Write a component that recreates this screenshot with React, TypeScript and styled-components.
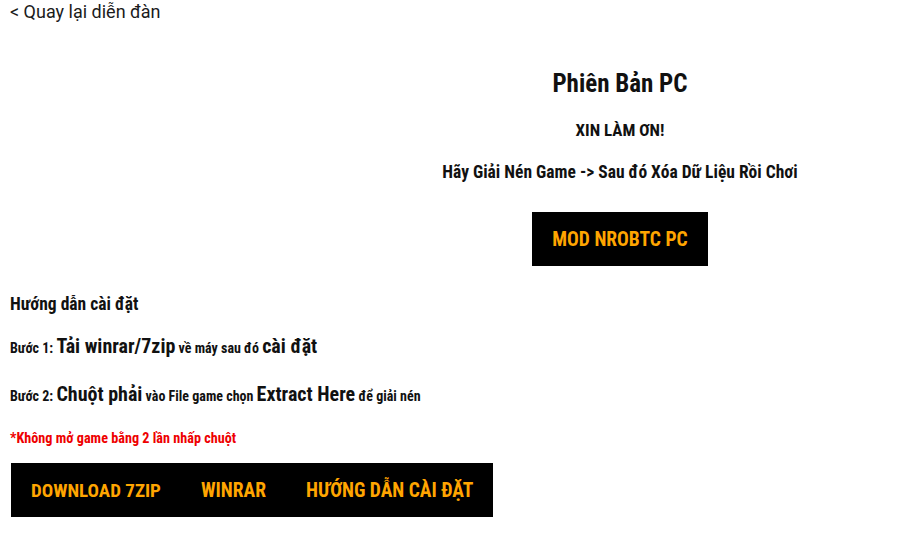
import React from "react";
import styled, { createGlobalStyle } from "styled-components";

const GlobalStyle = createGlobalStyle`
  html, body { margin: 0; padding: 0; background: #ffffff; }
  body { font-family: Roboto, "Liberation Sans", sans-serif; color: #111; }
  * { box-sizing: border-box; }
`;

const condensed = `"Roboto Condensed", "Open Sans", sans-serif`;

const Page = styled.div`
  padding: 0 10px;
`;

const BackLink = styled.a`
  display: block;
  font-family: Roboto, "Liberation Sans", sans-serif;
  font-size: 18px;
  line-height: 24px;
  color: #1b1b1b;
  text-decoration: none;
`;

const Hero = styled.section`
  display: grid;
  grid-template-columns: 410px 400px;
  margin-top: 42px;
`;

const Side = styled.div``;

const Panel = styled.div`
  display: flex;
  flex-direction: column;
  align-items: center;
  text-align: center;
  font-family: ${condensed};
  font-weight: 700;
  color: #111;
`;

const Title = styled.h2`
  margin: 0;
  font-size: 25px;
  line-height: 36px;
  font-weight: 700;
`;

const Line = styled.p<{ $size: number; $gap: number }>`
  margin: ${(p) => p.$gap}px 0 0;
  font-size: ${(p) => p.$size}px;
  line-height: 24px;
`;

const BlackButton = styled.a<{ $size?: number }>`
  display: inline-flex;
  align-items: center;
  justify-content: center;
  height: 54px;
  padding: 0 20px;
  background: #000;
  color: #ffa500;
  font-family: ${condensed};
  font-weight: 700;
  font-size: ${(p) => p.$size ?? 19.5}px;
  text-transform: uppercase;
  text-decoration: none;
  white-space: nowrap;
`;

const HeroButton = styled(BlackButton)`
  margin-top: 28px;
`;

const Guide = styled.section`
  margin-top: 26px;
  font-family: ${condensed};
  font-weight: 700;
  color: #111;
`;

const GuideTitle = styled.h3`
  margin: 0;
  font-size: 17.5px;
  line-height: 24px;
`;

const Step = styled.p<{ $gap: number }>`
  margin: ${(p) => p.$gap}px 0 0;
  font-size: 14px;
  line-height: 28px;
`;

const Big = styled.span`
  font-family: Roboto, "Liberation Sans", sans-serif;
  font-weight: 700;
  font-stretch: 87.5%;
  font-size: 20px;
`;

const Warning = styled.p`
  margin: 18px 0 0;
  color: #ee0000;
  font-size: 14.2px;
  line-height: 20px;
`;

const ButtonBar = styled.div`
  display: flex;
  width: fit-content;
  margin: 15px 0 0 1px;
`;

export default function App() {
  return (
    <>
      <GlobalStyle />
      <Page>
        <BackLink href="#">&lt; Quay lại diễn đàn</BackLink>
        <Hero>
          <Side />
          <Panel>
            <Title>Phiên Bản PC</Title>
            <Line $size={17} $gap={16}>XIN LÀM ƠN!</Line>
            <Line $size={17.5} $gap={18}>Hãy Giải Nén Game -&gt; Sau đó Xóa Dữ Liệu Rồi Chơi</Line>
            <HeroButton href="#">MOD NROBTC PC</HeroButton>
          </Panel>
        </Hero>
        <Guide>
          <GuideTitle>Hướng dẫn cài đặt</GuideTitle>
          <Step $gap={16}>
            Bước 1: <Big>Tải winrar/7zip</Big> về máy sau đó <Big>cài đặt</Big>
          </Step>
          <Step $gap={18}>
            Bước 2: <Big>Chuột phải</Big> vào File game chọn <Big>Extract Here</Big> để giải nén
          </Step>
          <Warning>*Không mở game bằng 2 lần nhấp chuột</Warning>
          <ButtonBar>
            <BlackButton href="#" $size={19}>DOWNLOAD 7ZIP</BlackButton>
            <BlackButton href="#" $size={19.5}>WINRAR</BlackButton>
            <BlackButton href="#" $size={19.5}>HƯỚNG DẪN CÀI ĐẶT</BlackButton>
          </ButtonBar>
        </Guide>
      </Page>
    </>
  );
}
